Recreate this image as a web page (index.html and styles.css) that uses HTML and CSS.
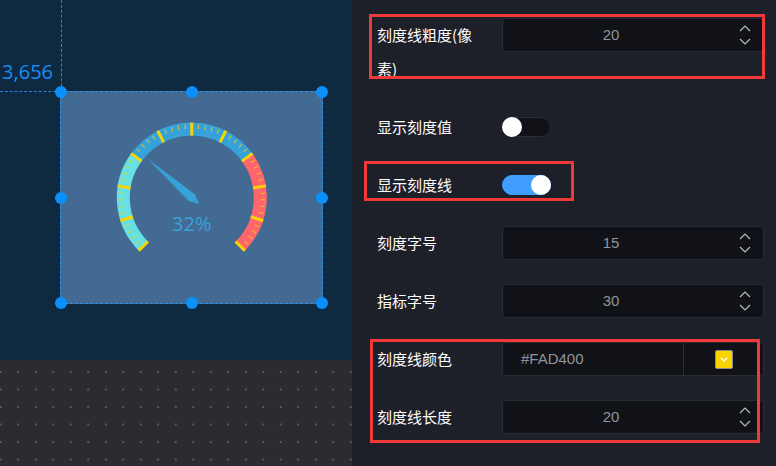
FILE: index.html
```html
<!DOCTYPE html>
<html lang="zh">
<head>
<meta charset="utf-8">
<title>Gauge editor</title>
<link rel="stylesheet" href="styles.css">
</head>
<body>
<div class="app">
  <div class="canvas">
    <div class="stage">
      <div class="guide-v"></div>
      <div class="guide-h"></div>
      <span class="coord">3,656</span>
      <div class="widget">
        <svg class="gauge" viewBox="0 0 261 211" width="261" height="211">
          <defs>
            <line id="maj" x1="130.8" y1="30.6" x2="130.8" y2="43.6"/>
            <line id="min" x1="130.8" y1="32.2" x2="130.8" y2="36.8"/>
          </defs>
          <g fill="none" stroke-width="13">
            <path d="M82.36 154.04A68.5 68.5 0 0 1 75.38 65.34" stroke="#67e0e3"/>
            <path d="M75.38 65.34A68.5 68.5 0 0 1 186.22 65.34" stroke="#37a2da"/>
            <path d="M186.22 65.34A68.5 68.5 0 0 1 179.24 154.04" stroke="#fd666d"/>
          </g>
          <g stroke="#fad400" stroke-opacity="0.75" stroke-width="1.1">
            <use href="#min" transform="rotate(-129.6 130.8 105.6)"/>
            <use href="#min" transform="rotate(-124.2 130.8 105.6)"/>
            <use href="#min" transform="rotate(-118.8 130.8 105.6)"/>
            <use href="#min" transform="rotate(-113.4 130.8 105.6)"/>
            <use href="#min" transform="rotate(-102.6 130.8 105.6)"/>
            <use href="#min" transform="rotate(-97.2 130.8 105.6)"/>
            <use href="#min" transform="rotate(-91.8 130.8 105.6)"/>
            <use href="#min" transform="rotate(-86.4 130.8 105.6)"/>
            <use href="#min" transform="rotate(-75.6 130.8 105.6)"/>
            <use href="#min" transform="rotate(-70.2 130.8 105.6)"/>
            <use href="#min" transform="rotate(-64.8 130.8 105.6)"/>
            <use href="#min" transform="rotate(-59.4 130.8 105.6)"/>
            <use href="#min" transform="rotate(-48.6 130.8 105.6)"/>
            <use href="#min" transform="rotate(-43.2 130.8 105.6)"/>
            <use href="#min" transform="rotate(-37.8 130.8 105.6)"/>
            <use href="#min" transform="rotate(-32.4 130.8 105.6)"/>
            <use href="#min" transform="rotate(-21.6 130.8 105.6)"/>
            <use href="#min" transform="rotate(-16.2 130.8 105.6)"/>
            <use href="#min" transform="rotate(-10.8 130.8 105.6)"/>
            <use href="#min" transform="rotate(-5.4 130.8 105.6)"/>
            <use href="#min" transform="rotate(5.4 130.8 105.6)"/>
            <use href="#min" transform="rotate(10.8 130.8 105.6)"/>
            <use href="#min" transform="rotate(16.2 130.8 105.6)"/>
            <use href="#min" transform="rotate(21.6 130.8 105.6)"/>
            <use href="#min" transform="rotate(32.4 130.8 105.6)"/>
            <use href="#min" transform="rotate(37.8 130.8 105.6)"/>
            <use href="#min" transform="rotate(43.2 130.8 105.6)"/>
            <use href="#min" transform="rotate(48.6 130.8 105.6)"/>
            <use href="#min" transform="rotate(59.4 130.8 105.6)"/>
            <use href="#min" transform="rotate(64.8 130.8 105.6)"/>
            <use href="#min" transform="rotate(70.2 130.8 105.6)"/>
            <use href="#min" transform="rotate(75.6 130.8 105.6)"/>
            <use href="#min" transform="rotate(86.4 130.8 105.6)"/>
            <use href="#min" transform="rotate(91.8 130.8 105.6)"/>
            <use href="#min" transform="rotate(97.2 130.8 105.6)"/>
            <use href="#min" transform="rotate(102.6 130.8 105.6)"/>
            <use href="#min" transform="rotate(113.4 130.8 105.6)"/>
            <use href="#min" transform="rotate(118.8 130.8 105.6)"/>
            <use href="#min" transform="rotate(124.2 130.8 105.6)"/>
            <use href="#min" transform="rotate(129.6 130.8 105.6)"/>
          </g>
          <g stroke="#fad400" stroke-width="3">
            <use href="#maj" transform="rotate(-135 130.8 105.6)"/>
            <use href="#maj" transform="rotate(-108 130.8 105.6)"/>
            <use href="#maj" transform="rotate(-81 130.8 105.6)"/>
            <use href="#maj" transform="rotate(-54 130.8 105.6)"/>
            <use href="#maj" transform="rotate(-27 130.8 105.6)"/>
            <use href="#maj" transform="rotate(0 130.8 105.6)"/>
            <use href="#maj" transform="rotate(27 130.8 105.6)"/>
            <use href="#maj" transform="rotate(54 130.8 105.6)"/>
            <use href="#maj" transform="rotate(81 130.8 105.6)"/>
            <use href="#maj" transform="rotate(108 130.8 105.6)"/>
            <use href="#maj" transform="rotate(135 130.8 105.6)"/>
          </g>
          <polygon points="130.8,45.6 135.3,105.6 130.8,115.6 126.3,105.6" fill="#37a2da" transform="rotate(-48.6 130.8 105.6)"/>
          <text class="pct" x="130.8" y="138.7" text-anchor="middle">32%</text>
        </svg>
        <span class="handle h-tl"></span>
        <span class="handle h-tc"></span>
        <span class="handle h-tr"></span>
        <span class="handle h-ml"></span>
        <span class="handle h-mr"></span>
        <span class="handle h-bl"></span>
        <span class="handle h-bc"></span>
        <span class="handle h-br"></span>
      </div>
    </div>
    <div class="dots"></div>
  </div>

  <div class="panel">
    <div class="row mark mark-1">
      <div class="label">刻度线粗度(像素)</div>
      <div class="num">
        <span class="val">20</span>
        <span class="spin"><svg width="12" height="20" viewBox="0 0 12 20"><path d="M1 6L6 1L11 6M1 14L6 19L11 14" fill="none" stroke="#b8bcc4" stroke-width="1.2"/></svg></span>
      </div>
    </div>

    <div class="row">
      <div class="label">显示刻度值</div>
      <div class="toggle"><span class="knob"></span></div>
    </div>

    <div class="row mark mark-2">
      <div class="label">显示刻度线</div>
      <div class="toggle on"><span class="knob"></span></div>
    </div>

    <div class="row">
      <div class="label">刻度字号</div>
      <div class="num">
        <span class="val">15</span>
        <span class="spin"><svg width="12" height="20" viewBox="0 0 12 20"><path d="M1 6L6 1L11 6M1 14L6 19L11 14" fill="none" stroke="#b8bcc4" stroke-width="1.2"/></svg></span>
      </div>
    </div>

    <div class="row">
      <div class="label">指标字号</div>
      <div class="num">
        <span class="val">30</span>
        <span class="spin"><svg width="12" height="20" viewBox="0 0 12 20"><path d="M1 6L6 1L11 6M1 14L6 19L11 14" fill="none" stroke="#b8bcc4" stroke-width="1.2"/></svg></span>
      </div>
    </div>

    <div class="group mark mark-3">
      <div class="row">
        <div class="label">刻度线颜色</div>
        <div class="color-input">
          <span class="hex">#FAD400</span>
          <span class="picker"><span class="swatch"><svg width="8" height="5" viewBox="0 0 8 5"><path d="M0.8 0.8L4 4L7.2 0.8" fill="none" stroke="#fff" stroke-width="1.3"/></svg></span></span>
        </div>
      </div>
      <div class="row">
        <div class="label">刻度线长度</div>
        <div class="num">
          <span class="val">20</span>
          <span class="spin"><svg width="12" height="20" viewBox="0 0 12 20"><path d="M1 6L6 1L11 6M1 14L6 19L11 14" fill="none" stroke="#b8bcc4" stroke-width="1.2"/></svg></span>
        </div>
      </div>
    </div>
  </div>
</div>
</body>
</html>
```

FILE: styles.css
```css
* { box-sizing: border-box; }

body {
  margin: 0;
  background: #1e2029;
  font-family: "Noto Sans CJK SC", sans-serif;
}

.app {
  display: flex;
  width: 776px;
  height: 466px;
  overflow: hidden;
}

/* ---------- canvas ---------- */
.canvas {
  width: 352px;
  flex: none;
  display: flex;
  flex-direction: column;
}

.stage {
  position: relative;
  height: 360px;
  background: #0f2941;
}

.dots {
  flex: 1;
  background: #2a2c31 radial-gradient(circle, #575b61 0.9px, transparent 1.3px) 9.5px 3.25px / 17.5px 17.5px;
}

.guide-v {
  position: absolute;
  left: 61px;
  top: 0;
  height: 91px;
  border-left: 1px dashed #2389e4;
}

.guide-h {
  position: absolute;
  left: 0;
  top: 91px;
  width: 61px;
  border-top: 1px dashed #2389e4;
}

.coord {
  position: absolute;
  right: 299px;
  top: 58px;
  font: 20px/28px "Open Sans", sans-serif;
  color: #1590f5;
}

.widget {
  position: absolute;
  left: 60px;
  top: 91px;
  width: 263px;
  height: 213px;
  border: 1px dashed #2a8fe8;
  background: #436a93;
}

.gauge { display: block; }

.pct {
  font-family: "Open Sans", sans-serif;
  font-size: 20px;
  fill: #37a2da;
}

.handle {
  position: absolute;
  width: 12px;
  height: 12px;
  border-radius: 50%;
  background: #0b90fb;
  transform: translate(-50%, -50%);
}
.h-tl { left: 0; top: 0; }
.h-tc { left: 50%; top: 0; }
.h-tr { left: 100%; top: 0; }
.h-ml { left: 0; top: 50%; }
.h-mr { left: 100%; top: 50%; }
.h-bl { left: 0; top: 100%; }
.h-bc { left: 50%; top: 100%; }
.h-br { left: 100%; top: 100%; }

/* ---------- panel ---------- */
.panel {
  flex: 1;
  padding: 18px 12px 0 25px;
  display: flex;
  flex-direction: column;
  gap: 24px;
}

.group {
  position: relative;
  display: flex;
  flex-direction: column;
  gap: 24px;
}

.row {
  position: relative;
  display: grid;
  grid-template-columns: 100px 262px;
  column-gap: 25px;
  align-items: start;
}

.label {
  font-size: 15px;
  line-height: 34px;
  color: #fff;
}

.num,
.color-input {
  display: flex;
  align-items: center;
  height: 34px;
  border: 1px solid #2a2d36;
  border-radius: 4px;
  background: #111217;
}

.val {
  flex: 1;
  padding-right: 8px;
  text-align: center;
  font: 15px/32px "Liberation Sans", sans-serif;
  color: #8f959c;
}

.spin {
  width: 36px;
  display: flex;
  justify-content: center;
}
.spin svg { display: block; }

.hex {
  flex: 1;
  padding-left: 18px;
  font: 15px/32px "Liberation Sans", sans-serif;
  color: #8f959c;
}

.picker {
  width: 80px;
  height: 100%;
  border-left: 1px solid #2a2d36;
  display: flex;
  align-items: center;
  justify-content: center;
}

.swatch {
  width: 18px;
  height: 19px;
  background: #fad400;
  border: 1px solid #8e8e8e;
  border-radius: 2px;
  display: flex;
  align-items: center;
  justify-content: center;
}
.swatch svg { display: block; }

.toggle {
  display: flex;
  justify-content: flex-start;
  width: 49px;
  height: 20px;
  margin-top: 7px;
  border: 1px solid #2a2d36;
  border-radius: 10px;
  background: #111217;
}
.toggle .knob {
  width: 20px;
  height: 20px;
  margin: -1px;
  border-radius: 50%;
  background: #fff;
}
.toggle.on {
  justify-content: flex-end;
  background: #409eff;
  border-color: #409eff;
}

/* ---------- annotation outlines ---------- */
.mark::after {
  content: "";
  position: absolute;
  border: 3px solid #f03a3a;
  pointer-events: none;
}
.mark-1::after { left: -8px; right: -1px; top: -4px; bottom: 7px; }
.mark-2::after { left: -13px; width: 204px; top: -7px; bottom: 1px; }
.mark-3::after { left: -7px; right: 4px; top: -3px; bottom: -9px; }
```
